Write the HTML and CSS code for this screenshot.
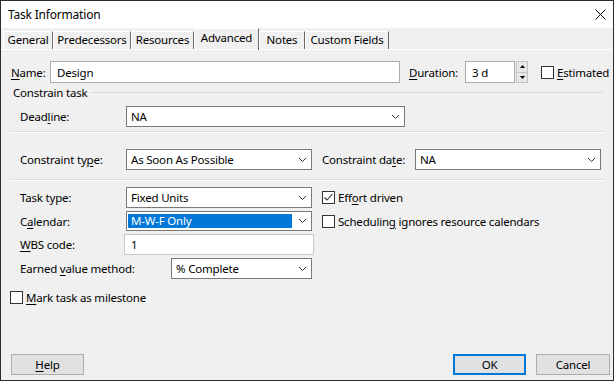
FILE: index.html
```html
<!DOCTYPE html>
<html lang="en">
  <head>
    <meta charset="UTF-8" />
    <title>Task Information</title>
    <link rel="stylesheet" href="styles.css">
  </head>
  <body>
    <div class="dialog">
      <div class="titlebar">
        <span>Task Information</span>
        <svg class="close" width="11" height="11" viewBox="0 0 11 11">
          <path d="M0.5 0.5 L10.5 10.5 M10.5 0.5 L0.5 10.5" stroke="#000" stroke-width="1" fill="none" />
        </svg>
      </div>

      <div class="tabs">
        <div class="tab tab-general">General</div>
        <div class="tab tab-pred">Predecessors</div>
        <div class="tab tab-res">Resources</div>
        <div class="tab tab-adv active">Advanced</div>
        <div class="tab tab-notes">Notes</div>
        <div class="tab tab-custom">Custom Fields</div>
      </div>

      <div class="panel">
        <div class="row row-name">
          <span class="lbl lbl-name"><u>N</u>ame:</span>
          <div class="input input-name">Design</div>
          <span class="lbl lbl-duration"><u>D</u>uration:</span>
          <div class="input input-dur">3 d</div>
          <div class="spin">
            <div class="spin-btn">
              <svg width="5" height="3" viewBox="0 0 5 3"><path d="M0 3 L2.5 0 L5 3 Z" fill="#000" /></svg>
            </div>
            <div class="spin-btn">
              <svg width="5" height="3" viewBox="0 0 5 3"><path d="M0 0 L2.5 3 L5 0 Z" fill="#000" /></svg>
            </div>
          </div>
          <span class="check check-est"><span class="box"></span><span><u>E</u>stimated</span></span>
        </div>

        <div class="group-title">
          <span>Constrain task</span>
          <i class="rule"></i>
        </div>

        <div class="row row-deadline">
          <span class="lbl lbl-main">Dead<u>l</u>ine:</span>
          <div class="select select-deadline">
            <span>NA</span>
            <svg class="chev" width="7" height="4" viewBox="0 0 7 4"><path d="M0 0 L3.5 3.5 L7 0" stroke="#333" fill="none" /></svg>
          </div>
        </div>

        <div class="sep sep-1"></div>

        <div class="row row-constraint">
          <span class="lbl lbl-main">Constraint ty<u>p</u>e:</span>
          <div class="select select-mid">
            <span>As Soon As Possible</span>
            <svg class="chev" width="7" height="4" viewBox="0 0 7 4"><path d="M0 0 L3.5 3.5 L7 0" stroke="#333" fill="none" /></svg>
          </div>
          <span class="lbl lbl-cdate">Constraint da<u>t</u>e:</span>
          <div class="select select-mid">
            <span>NA</span>
            <svg class="chev" width="7" height="4" viewBox="0 0 7 4"><path d="M0 0 L3.5 3.5 L7 0" stroke="#333" fill="none" /></svg>
          </div>
        </div>

        <div class="sep sep-2"></div>

        <div class="fields">
          <div class="row row-task">
            <span class="lbl lbl-main">Task type:</span>
            <div class="select select-mid">
              <span>Fixed Units</span>
              <svg class="chev" width="7" height="4" viewBox="0 0 7 4"><path d="M0 0 L3.5 3.5 L7 0" stroke="#333" fill="none" /></svg>
            </div>
            <span class="check check-side">
              <span class="box">
                <svg width="11" height="11" viewBox="0 0 11 11"><path d="M1.5 5.5 L4 8 L9.5 2" stroke="#333" stroke-width="1.1" fill="none" /></svg>
              </span>
              <span>Eff<u>o</u>rt driven</span>
            </span>
          </div>
          <div class="row row-cal">
            <span class="lbl lbl-main">C<u>a</u>lendar:</span>
            <div class="select select-mid select-focus">
              <span class="hl">M-W-F Only</span>
              <svg class="chev" width="7" height="4" viewBox="0 0 7 4"><path d="M0 0 L3.5 3.5 L7 0" stroke="#333" fill="none" /></svg>
            </div>
            <span class="check check-side"><span class="box"></span><span>Schedulin<u>g</u> ignores resource calendars</span></span>
          </div>
          <div class="row row-wbs">
            <span class="lbl lbl-wbs"><u>W</u>BS code:</span>
            <div class="input input-wbs">1</div>
          </div>
          <div class="row row-earned">
            <span class="lbl lbl-earned">Earned <u>v</u>alue method:</span>
            <div class="select select-earned">
              <span>% Complete</span>
              <svg class="chev" width="7" height="4" viewBox="0 0 7 4"><path d="M0 0 L3.5 3.5 L7 0" stroke="#333" fill="none" /></svg>
            </div>
          </div>
        </div>

        <span class="check check-milestone"><span class="box"></span><span><u>M</u>ark task as milestone</span></span>
      </div>

      <div class="buttons">
        <div class="btn btn-help"><span><u>H</u>elp</span></div>
        <div class="btn btn-ok">OK</div>
        <div class="btn btn-cancel">Cancel</div>
      </div>
    </div>
  </body>
</html>
```

FILE: styles.css
```css
* {
  box-sizing: border-box;
}

body {
  margin: 0;
  font-family: "Noto Sans", "Open Sans", sans-serif;
  font-size: 11.5px;
  letter-spacing: -0.2px;
  color: #000;
}

u {
  text-decoration-thickness: 1px;
  text-underline-offset: 2px;
}

.dialog {
  width: 614px;
  height: 381px;
  border: 1px solid #2b2b2b;
  background: #f0f0f0;
  display: flex;
  flex-direction: column;
}

/* title bar */

.titlebar {
  height: 27px;
  background: #fff;
  display: flex;
  align-items: center;
  justify-content: space-between;
  padding: 0 7px 0 7px;
  font-size: 12px;
}

/* tab strip */

.tabs {
  height: 22px;
  display: flex;
  align-items: flex-end;
  padding-left: 2px;
  border-bottom: 1px solid #fff;
}

.tab {
  height: 18px;
  border-top: 1px solid #fff;
  border-left: 1px solid #fff;
  border-right: 1px solid #696969;
  line-height: 16px;
  text-align: center;
  white-space: nowrap;
}

.tab.active {
  height: 22px;
  margin-bottom: -1px;
  line-height: 18px;
}

.tab-general { width: 50px; }
.tab-pred { width: 78px; }
.tab-res { width: 63px; }
.tab-adv { width: 65px; }
.tab-notes { width: 46px; }
.tab-custom { width: 84px; }

/* panel */

.panel {
  flex: 1;
  display: flex;
  flex-direction: column;
}

.row {
  display: flex;
  align-items: center;
  height: 21px;
}

.lbl {
  white-space: nowrap;
}

.input,
.select {
  height: 100%;
  background: #fff;
  display: flex;
  align-items: center;
  white-space: nowrap;
}

.input {
  border: 1px solid #acacac;
  padding-left: 6px;
}

.select {
  border: 1px solid #7a7a7a;
  justify-content: space-between;
  padding: 0 5px 0 4px;
}

.chev {
  flex: none;
}

.row-name {
  height: 22px;
  margin-top: 11px;
  padding-left: 10px;
}

.lbl-name { width: 39px; }
.input-name { width: 350px; }
.lbl-duration { width: 56px; margin-left: 9px; }
.input-dur { width: 50px; }

.spin {
  width: 12px;
  height: 100%;
  margin-left: 1px;
  display: flex;
  flex-direction: column;
  border: 1px solid #c4c4c4;
}

.spin-btn {
  flex: 1;
  background: #e6e6e6;
  display: flex;
  align-items: center;
  justify-content: center;
}

.spin-btn + .spin-btn {
  border-top: 1px solid #c4c4c4;
}

.check {
  display: flex;
  align-items: center;
  white-space: nowrap;
}

.check .box {
  width: 13px;
  height: 13px;
  border: 1px solid #333;
  background: #fff;
  margin-right: 3px;
  flex: none;
}

.check .box svg {
  display: block;
}

.check-est { margin-left: 13px; }

.group-title {
  height: 14px;
  margin-top: 2px;
  padding: 0 10px 0 12px;
  display: flex;
  align-items: center;
}

.rule {
  flex: 1;
  margin-left: 4px;
  border-top: 1px solid #dcdcdc;
}

.row-deadline { margin-top: 7px; padding-left: 19px; }
.lbl-main { width: 106px; }
.select-deadline { width: 279px; }

.sep {
  margin: 0 10px 0 9px;
  border-top: 1px solid #dcdcdc;
  border-bottom: 1px solid #fff;
}

.sep-1 { margin-top: 4px; }

.row-constraint { margin-top: 16px; padding-left: 19px; }
.select-mid { width: 186px; }
.lbl-cdate { width: 93px; margin-left: 10px; }

.sep-2 { margin-top: 9px; }

.fields {
  margin-top: 6px;
  display: flex;
  flex-direction: column;
  gap: 3px;
  padding-left: 19px;
}

.row-cal { height: 20px; }

.check-side { margin-left: 10px; }

.select-focus {
  padding-left: 1px;
}

.hl {
  background: #0078d7;
  color: #fff;
  width: 164px;
  height: 14px;
  line-height: 14px;
  padding-left: 3px;
}

.lbl-wbs { width: 104px; }
.input-wbs { width: 190px; border-color: #c8c8c8; }

.lbl-earned { width: 151px; }
.select-earned { width: 141px; }

.check-milestone {
  margin-top: 12px;
  margin-left: 9px;
  height: 13px;
}

/* buttons */

.buttons {
  display: flex;
  padding: 0 3px 5px 10px;
}

.btn {
  width: 73px;
  height: 21px;
  background: #e1e1e1;
  border: 1px solid #adadad;
  display: flex;
  align-items: center;
  justify-content: center;
}

.btn-ok {
  margin-left: auto;
  border: 2px solid #0078d7;
}

.btn-cancel {
  width: 74px;
  margin-left: 10px;
}
```
